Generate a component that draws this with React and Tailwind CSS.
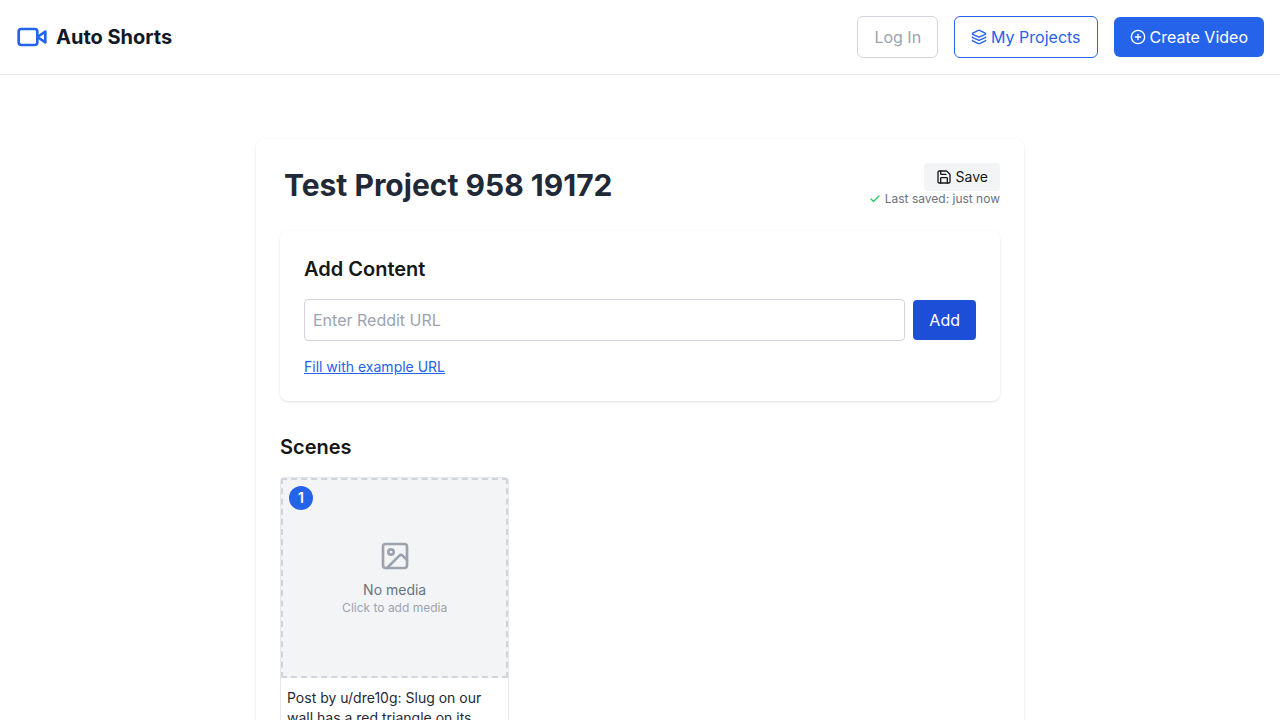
import { Layers, CirclePlus, Check } from "lucide-react";
import { LuSave, LuImage } from "react-icons/lu";

function VideoIcon() {
  return (
    <svg className="h-8 w-8 text-[#2563eb]" viewBox="0 0 24 24" fill="none" stroke="currentColor" strokeWidth="2" strokeLinecap="round" strokeLinejoin="round">
      <path d="m22 8-6 4 6 4V8Z" />
      <rect width="14" height="12" x="2" y="6" rx="2" ry="2" />
    </svg>
  );
}

function Header() {
  return (
    <header className="flex items-center justify-between border-b border-[#e5e7eb] bg-white p-4">
      <a className="flex items-center gap-2 text-xl font-bold text-[#111827]">
        <VideoIcon />
        Auto Shorts
      </a>
      <nav className="flex items-center gap-4">
        <button className="rounded-md border border-[#d1d5db] px-4 py-2 text-[#9ca3af]">Log In</button>
        <button className="flex items-center gap-1 rounded-md border border-[#2563eb] px-4 py-2 text-[#2563eb]">
          <Layers className="h-4 w-4" />
          My Projects
        </button>
        <button className="flex items-center gap-1 rounded-md bg-[#2563eb] px-4 py-2 text-white">
          <CirclePlus className="h-4 w-4" />
          Create Video
        </button>
      </nav>
    </header>
  );
}

function AddContent() {
  return (
    <section className="mb-8 rounded-lg bg-white p-6 shadow-[0_1px_3px_0_rgba(0,0,0,0.1),0_1px_2px_-1px_rgba(0,0,0,0.1)]">
      <h2 className="mb-4 text-xl leading-7 font-semibold">Add Content</h2>
      <div className="flex items-center gap-2">
        <input
          className="h-[42px] min-w-0 flex-1 rounded border border-[#d1d5db] p-2 placeholder:text-[#9ca3af]"
          placeholder="Enter Reddit URL"
        />
        <button className="rounded bg-[#1d4ed8] px-4 py-2 text-white">Add</button>
      </div>
      <button className="mt-4 block text-sm text-[#2563eb] underline">Fill with example URL</button>
    </section>
  );
}

function SceneCard({ number, text }) {
  return (
    <article className="relative h-[320px] overflow-hidden rounded border border-[#e5e7eb] bg-white">
      <div className="flex h-[200px] flex-col items-center justify-center border-2 border-dashed border-[#d1d5db] bg-[#f3f4f6]">
        <LuImage className="mb-2 h-8 w-8 text-[#9ca3af]" />
        <p className="text-sm text-[#6b7280]">No media</p>
        <p className="text-xs text-[#9ca3af]">Click to add media</p>
      </div>
      <span className="absolute top-2 left-2 flex h-6 w-6 items-center justify-center rounded-full bg-[#2563eb] text-sm font-semibold text-white">
        {number}
      </span>
      <p className="px-1.5 pt-2.5 text-sm text-[#1f2937]">{text}</p>
    </article>
  );
}

export default function App() {
  return (
    <div className="h-screen overflow-hidden bg-white font-['Inter',sans-serif] text-[#171717]">
      <Header />
      <main className="mx-auto mt-16 w-[768px] rounded-lg bg-white p-6 shadow-[0_1px_3px_0_rgba(0,0,0,0.1),0_1px_2px_-1px_rgba(0,0,0,0.1)]">
        <div className="mb-6 flex items-center justify-between">
          <h1 className="px-1 text-3xl font-bold text-[#1f2937]">Test Project 958 19172</h1>
          <div className="flex flex-col items-end">
            <button className="flex items-center gap-1 rounded bg-[#f3f4f6] px-3 py-1 text-sm">
              <LuSave className="h-4 w-4" />
              Save
            </button>
            <p className="flex items-center gap-1 text-xs text-[#6b7280]">
              <Check className="h-3 w-3 text-[#22c55e]" strokeWidth={2.4} />
              Last saved: just now
            </p>
          </div>
        </div>
        <AddContent />
        <h2 className="mb-4 text-xl leading-7 font-semibold">Scenes</h2>
        <div className="grid grid-cols-3 gap-4">
          <SceneCard number={1} text="Post by u/dre10g: Slug on our wall has a red triangle on its" />
        </div>
      </main>
    </div>
  );
}
